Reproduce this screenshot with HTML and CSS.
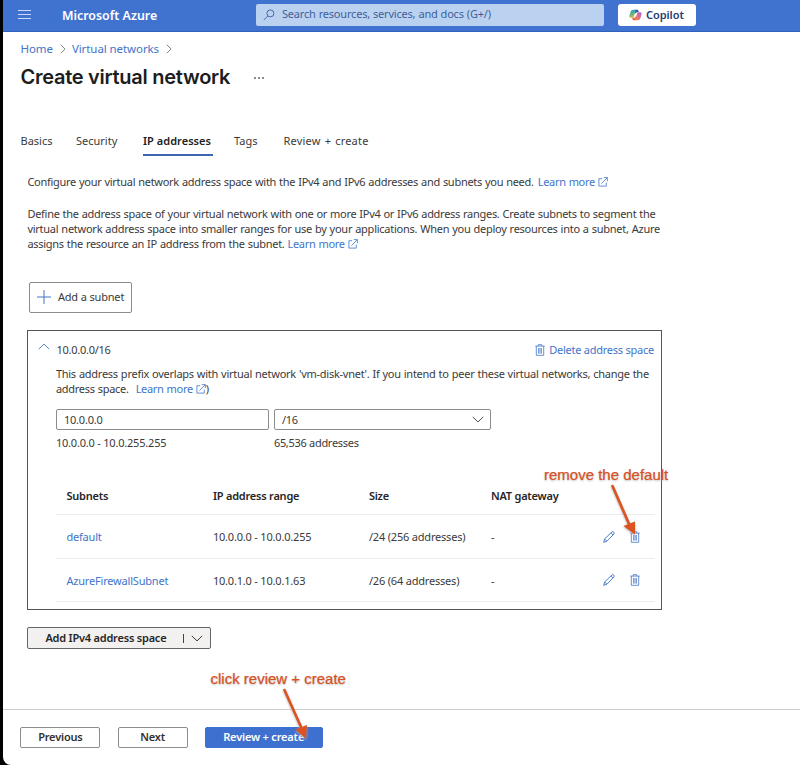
FILE: index.html
```html
<!DOCTYPE html>
<html lang="en">
<head>
<meta charset="utf-8">
<title>Create virtual network - Microsoft Azure</title>
<link rel="stylesheet" href="styles.css">
</head>
<body>
<svg class="defs" width="0" height="0" aria-hidden="true">
  <symbol id="ext" viewBox="0 0 10 10"><path d="M4.2 1.7H.9v7.4h7.4V5.6M5.8.6h3.6v3.6M9.2.8 3.4 6.6" fill="none" stroke="currentColor" stroke-width=".8"/></symbol>
  <symbol id="trash" viewBox="0 0 10 12"><path d="M.3 2.1h9.4M3.2 2V.7h3.6V2M1.3 2.1v9.2h7.4V2.1M3.6 4v5.6M5 4v5.6M6.4 4v5.6" fill="none" stroke="currentColor" stroke-width=".8"/></symbol>
  <symbol id="pencil" viewBox="0 0 12 12"><path d="M.7 11.3 1.6 8 9 .9q1-.6 1.8.2t.2 1.8L4 10.2zM1.6 8 4 10.2M8 1.9l2.1 2.1" fill="none" stroke="currentColor" stroke-width=".9" stroke-linejoin="round"/></symbol>
  <symbol id="down" viewBox="0 0 12 7"><path d="m.8.9 5.2 5L11.2.9" fill="none" stroke="currentColor" stroke-width=".9"/></symbol>
  <symbol id="right" viewBox="0 0 6 10"><path d="m.8.8 4.3 4.2L.8 9.2" fill="none" stroke="currentColor" stroke-width=".9"/></symbol>
</svg>
<div class="window">
  <header class="topbar">
    <svg class="menu" viewBox="0 0 13 9"><path d="M0 .5h13M0 4.5h13M0 8.5h13" stroke="#c9dbf8" stroke-width="1"/></svg>
    <span class="brand">Microsoft Azure</span>
    <div class="search">
      <svg class="glass" viewBox="0 0 12 12"><circle cx="7.4" cy="4.4" r="3.5" fill="none" stroke="#3e5f9c" stroke-width=".9"/><path d="M4.8 7 .8 11" stroke="#3e5f9c" stroke-width=".9"/></svg>
      <span>Search resources, services, and docs (G+/)</span>
    </div>
    <div class="copilot">
      <svg class="logo" viewBox="0 0 14 13">
        <defs>
          <linearGradient id="ca" x1="0" y1="0" x2=".4" y2="1"><stop offset="0" stop-color="#2b8fd8"/><stop offset=".55" stop-color="#58b58a"/><stop offset="1" stop-color="#e7b93c"/></linearGradient>
          <linearGradient id="cb" x1="1" y1="0" x2=".2" y2="1"><stop offset="0" stop-color="#a066dc"/><stop offset=".5" stop-color="#e0698f"/><stop offset="1" stop-color="#f08a4a"/></linearGradient>
        </defs>
        <path d="M4.3.7h4.2q-1.1.4-1.5 1.8L5.3 8.1Q4.900 9.600 3.200 9.600H2Q-.1 9.500.500 7L1.800 2.600Q2.400.700 4.300.700z" fill="url(#ca)"/>
        <path d="M7 .7h1.700q1.100 0 1.500 1.400l.4 1.300H8.900q-1.300 0-1.800 1.300L6.300 5z" fill="#2657b8"/>
        <path d="M9.700 12.300H5.500q1.100-.4 1.500-1.800l1.700-5.600q.4-1.500 2.100-1.500H12q2.100.1 1.500 2.600l-1.300 4.400q-.6 1.900-2.500 1.900z" fill="url(#cb)"/>
        <path d="M6.900 12.300H5.200q-1.100 0-1.500-1.400l-.4-1.300H5q1.300 0 1.800-1.300L7.600 8z" fill="#e5683f"/>
      </svg>
      <span>Copilot</span>
    </div>
  </header>

  <nav class="crumbs">
    <a>Home</a><svg class="sep"><use href="#right"/></svg><a>Virtual networks</a><svg class="sep"><use href="#right"/></svg>
  </nav>
  <div class="heading"><h1>Create virtual network</h1><span class="dots"><i></i><i></i><i></i></span></div>

  <nav class="tabs">
    <span class="basics">Basics</span><span class="security">Security</span><span class="active">IP addresses</span><span class="tags">Tags</span><span class="review">Review + create</span>
  </nav>

  <main class="content">
    <p class="intro">Configure your virtual network address space with the IPv4 and IPv6 addresses and subnets you need. <a class="more first">Learn more <svg><use href="#ext"/></svg></a></p>
    <p class="intro second">Define the address space of your virtual network with one or more IPv4 or IPv6 address ranges. Create subnets to segment the<br><span class="loose">virtual network address space into smaller ranges for use by your applications. When you deploy resources into a subnet, Azure</span><br>assigns the resource an IP address from the subnet. <a class="more">Learn more <svg><use href="#ext"/></svg></a></p>

    <button class="add-subnet"><svg viewBox="0 0 14 14"><path d="M7 0v14M0 7h14" stroke="#4675c8" stroke-width="1"/></svg><span>Add a subnet</span></button>

    <section class="panel">
      <div class="space-head">
        <svg class="up"><use href="#down"/></svg>
        <span class="cidr">10.0.0.0/16</span>
        <a class="delete"><svg><use href="#trash"/></svg><span>Delete address space</span></a>
      </div>
      <div class="space-body">
        <p class="overlap"><span class="loose">This address prefix overlaps with virtual network 'vm-disk-vnet'. If you intend to peer these virtual networks, change the</span><br>address space. <a class="more late">Learn more <svg><use href="#ext"/></svg></a>)</p>
        <div class="fields">
          <div class="f-addr"><div class="box">10.0.0.0</div><div class="hint">10.0.0.0 - 10.0.255.255</div></div>
          <div class="f-mask"><div class="box"><span>/16</span><svg><use href="#down"/></svg></div><div class="hint">65,536 addresses</div></div>
        </div>
        <div class="table">
          <div class="row head"><span>Subnets</span><span>IP address range</span><span>Size</span><span>NAT gateway</span></div>
          <div class="row r1"><a>default</a><span>10.0.0.0 - 10.0.0.255</span><span>/24 (256 addresses)</span><span>-</span><svg class="edit"><use href="#pencil"/></svg><svg class="bin"><use href="#trash"/></svg></div>
          <div class="row r2"><a>AzureFirewallSubnet</a><span>10.0.1.0 - 10.0.1.63</span><span>/26 (64 addresses)</span><span>-</span><svg class="edit"><use href="#pencil"/></svg><svg class="bin"><use href="#trash"/></svg></div>
        </div>
      </div>
    </section>

    <button class="add-space"><span>Add IPv4 address space</span><i></i><svg><use href="#down"/></svg></button>
  </main>

  <footer class="actions">
    <button class="prev">Previous</button><button class="next">Next</button><button class="primary">Review + create</button>
  </footer>
</div>

<div class="note note-remove">remove the default</div>
<div class="note note-review">click review + create</div>
<svg class="arrows" viewBox="0 0 800 765">
  <g stroke="#de5220" stroke-width="2.600" stroke-linecap="round"><path d="m612.500 486 17 39M284.500 690l17 38"/></g>
  <g fill="#de5220"><path d="m635 534.500-11.500-8.500 11.500-4.500zM306 739l-10.500-9.500L307 725z"/></g>
</svg>
</body>
</html>
```
FILE: styles.css
```css
* { box-sizing: border-box; }
body {
  margin: 0;
  width: 800px;
  height: 765px;
  overflow: hidden;
  position: relative;
  background: #000;
  color: #3a3a3a;
  font: 11px/15px "Noto Sans", "Open Sans", sans-serif;
}
.defs { position: absolute; }
p, h1 { margin: 0; }
p { white-space: nowrap; letter-spacing: -.28px; word-spacing: .4px; }
.loose { letter-spacing: -.256px; }
svg { flex: none; display: block; }
span, a { white-space: nowrap; }
button { font: inherit; color: inherit; margin: 0; padding: 0 0 2px; display: flex; align-items: center; background: #fff; border: 1px solid #8c8c8c; border-radius: 2px; }
a { color: #4274c9; }

.window { margin-left: 3px; height: 765px; background: #fff; border-bottom-left-radius: 8px; overflow: hidden; display: flex; flex-direction: column; }

.topbar { height: 32px; flex: none; background: #4072d0; border-bottom: 1px solid #2f61bd; display: flex; align-items: center; padding: 0 0 2px 15px; }
.menu { width: 13px; height: 9px; }
.brand { margin-left: 31px; width: 194px; padding-top: 1px; color: #fff; font-size: 12.400px; font-weight: 600; }
.search { width: 348px; height: 22px; background: #bad2f0; border-radius: 2px; display: flex; align-items: center; padding: 0 0 1px 7px; color: #3e5f9c; letter-spacing: -.2px; word-spacing: .4px; }
.search span { margin-top: -1px; }
.glass { width: 12px; height: 12px; margin: 1px 7px 0 0; }
.copilot { margin-left: 14px; width: 78px; height: 22px; background: #fff; border-radius: 3px; display: flex; align-items: center; padding-left: 11px; color: #263a70; font-weight: 600; letter-spacing: -.05px; }
.logo { width: 13px; height: 12px; margin-right: 4px; }

.crumbs { display: flex; align-items: center; height: 15px; margin: 9px 0 0 17.500px; font-size: 11.500px; letter-spacing: -.08px; }
.sep { width: 6px; height: 10px; margin: 0 6px 0 7px; color: #777; }
.heading { display: flex; align-items: center; height: 26px; margin: 8px 0 0 17.500px; }
h1 { font: 600 20px/26px Inter, sans-serif; letter-spacing: -.27px; color: #1c1d20; width: 233px; white-space: nowrap; }
.dots { display: flex; gap: 2px; padding-top: 2px; }
.dots i { width: 2px; height: 2px; background: #8c8c8c; }

.tabs { display: flex; height: 24px; margin: 43px 0 0 17.500px; }
.tabs span { height: 23px; }
.basics { width: 55.500px; }
.security { width: 67px; }
.tabs .active { font-weight: 600; color: #222; border-bottom: 2px solid #3c66b3; width: 70px; margin-right: 21px; letter-spacing: .03px; }
.tags { width: 49.500px; }
.review { letter-spacing: .2px; word-spacing: 1px; }

.content { margin-left: 24px; padding-left: .4px; }
.intro { margin-top: 17px; height: 15px; }
.second { margin-top: 17px; height: 45px; }
.more { letter-spacing: -.3px; }
.more svg { display: inline-block; width: 10px; height: 10px; vertical-align: -1px; }
.first { margin-left: 1px; }
.late { margin-left: 4px; }

.add-subnet { width: 103px; height: 31px; margin: 31px 0 0 1.500px; padding: 0 0 1px 7px; letter-spacing: -.16px; }
.add-subnet span { margin-top: -1px; }
.add-subnet svg { width: 14px; height: 14px; margin-right: 7px; }

.panel { width: 635px; height: 280px; margin-top: 17px; border: 1px solid #555; }
.space-head { display: flex; align-items: center; height: 16px; margin-top: 10px; padding-left: 9.500px; letter-spacing: -.25px; }
.up { width: 12px; height: 7px; transform: rotate(180deg); color: #4274c9; margin: -5px 6.500px 0 0; }
.cidr { flex: 1; }
.delete { display: flex; align-items: center; gap: 4px; margin-right: 7.500px; }
.delete svg { width: 10px; height: 12px; margin-top: 1px; }
.space-body { padding-left: 27.500px; }
.overlap { margin-top: 9px; height: 30px; }
.fields { display: flex; gap: 5px; margin-top: 13px; letter-spacing: -.2px; }
.f-addr { width: 213px; }
.f-mask { width: 217px; }
.f-mask .hint { letter-spacing: -.3px; }
.box { height: 21px; border: 1px solid #8c8c8c; border-radius: 2px; padding: 0 7px; display: flex; align-items: center; justify-content: space-between; }
.box svg { width: 12px; height: 7px; margin-right: -1px; }
.hint { margin-top: 5px; white-space: nowrap; }
.table { width: 599px; margin-top: 26px; letter-spacing: -.19px; }
.row { display: grid; grid-template-columns: 146.500px 156px 122px 111.700px 27px 1fr; padding-left: 10.500px; align-items: center; height: 43px; border-bottom: 1px solid #ececec; }
.row.head { height: 39px; font-weight: 600; color: #262626; letter-spacing: -.22px; }
.row.r1 { height: 44px; }
.row svg { color: #4274c9; height: 12px; }
.edit { width: 12px; }
.bin { width: 10px; }

.add-space { width: 183.500px; height: 22px; margin-top: 17px; background: #f2f1f0; border-color: #666; padding-left: 17px; font-weight: 600; color: #262626; letter-spacing: -.21px; }
.add-space span { width: 137.500px; text-align: left; }
.add-space i { width: 1px; height: 9px; margin: 2px 7px 0 0; background: #444; }
.add-space svg { width: 12px; height: 7px; margin-top: 2px; }

.actions { display: flex; margin-top: auto; flex: none; height: 56px; border-top: 1px solid #cfcfcf; padding: 17px 0 0 17.400px; }
.actions button { justify-content: center; height: 21px; font-weight: 600; color: #303030; letter-spacing: -.18px; }
.prev { width: 80px; }
.actions .next { width: 70px; margin-left: 17.300px; }
.actions .primary { width: 118px; margin-left: 17px; background: #3e70d0; border-color: #3e70d0; color: #fff; }

.note { position: absolute; font: 15px/18px "Liberation Sans", sans-serif; color: #d9501f; white-space: nowrap; text-shadow: 0 1px 2px #bbb; -webkit-text-stroke: .2px #d9501f; }
.note-remove { left: 544px; top: 466px; }
.note-review { left: 210.500px; top: 670px; }
.arrows { position: absolute; left: 0; top: 0; width: 800px; height: 765px; filter: drop-shadow(0 1px 1px #aaa); }
```
